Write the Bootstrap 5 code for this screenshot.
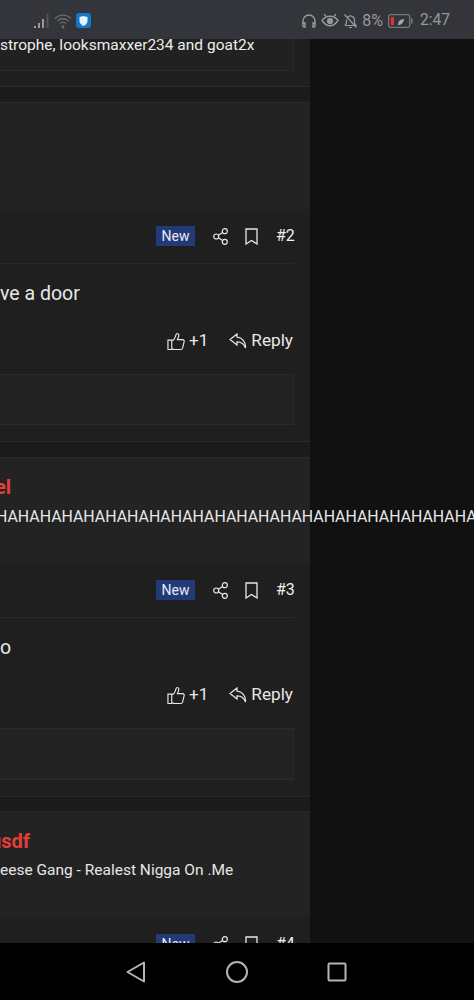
<!DOCTYPE html>
<html lang="en">
<head>
  <meta charset="UTF-8" />
  <meta name="viewport" content="width=device-width, initial-scale=1.0" />
  <title>Thread</title>
  <link href="https://cdn.jsdelivr.net/npm/bootstrap@5.3.0/dist/css/bootstrap.min.css" rel="stylesheet">
  <style>
    html, body { height: 100%; background: #111; }
    body { font-family: Roboto, "Liberation Sans", sans-serif; color: #e8e8e8; }
    .phone { height: 1000px; overflow: hidden; }
    /* Android status bar */
    .status-bar { height: 39px; background: #33353a; color: #98999c; font-size: 16px; padding: 2px 24px 0 33px; flex: none; }
    .status-bar svg { display: block; }
    .clock { font-size: 15.6px; }
    .battery-icon { margin-left: 5px; margin-right: 7px; }
    .shield { width: 15px; height: 15px; background: #1478c8; border-radius: 3px; }
    /* forum column */
    .scroll-area { flex: 1 1 auto; overflow: hidden; background: #111; min-height: 0; }
    .forum { width: 310px; background: #1b1b1b; }
    .tail { background: #1f1f1f; border-bottom: 1px solid #292929; height: 48px; padding-right: 16px; }
    .tail-box { height: 32px; border-right: 1px solid #2a2a2a; border-bottom: 1px solid #2a2a2a; background: #212121; font-size: 15.5px; line-height: 13px; color: #eee; white-space: nowrap; }
    .post { margin-top: 15px; background: #1f1f1f; border-top: 1px solid #292929; border-bottom: 1px solid #292929; }
    .post.tight { margin-top: 14px; }
    .post-head { height: 105px; background: #232323; padding-top: 17px; white-space: nowrap; }
    .post-head.tall { height: 106px; }
    .post-name { color: #e53e35; font-weight: 700; font-size: 20px; line-height: 24px; }
    .post-name.cut-el { text-indent: -5px; }
    .post-name.cut-usdf { text-indent: -10px; }
    .post-sig { font-size: 15.5px; line-height: 20px; margin-top: 7px; color: #e6e6e6; }
    .post-sig.wide { font-size: 15.9px; margin-top: 8px; text-indent: -4px; }
    .post-main { padding-right: 16px; }
    .meta-row { height: 55px; border-bottom: 1px solid #2a2a2a; font-size: 16px; color: #eee; }
    .new-tag { background: #223a78; color: #e6ebf5; font-size: 14px; line-height: 20px; width: 39px; text-align: center; margin-right: 18px; }
    .bookmark-icon { margin-left: 17px; }
    .post-no { width: 17px; margin-left: 18px; margin-right: 1px; white-space: nowrap; }
    .post-msg { font-size: 19.5px; line-height: 24px; margin-top: 18px; color: #e8e8e8; white-space: nowrap; }
    .post-actions { margin-top: 23px; height: 24px; font-size: 17.2px; color: #e8e8e8; padding-right: 1px; }
    .reply-icon { margin-left: 21px; }
    .react-box { height: 52px; margin-top: 21px; background: #232323; border: 1px solid #2b2b2b; border-left: 0; margin-bottom: 16px; }
    .react-box.short-box { height: 51px; }
    /* nav bar */
    .nav-strip { height: 57px; background: #000; flex: none; position: relative; z-index: 2; padding: 0 127px 0 126px; }
  </style>
</head>
<body>
  <div class="phone d-flex flex-column">
    <div class="status-bar d-flex align-items-center justify-content-between">
      <div class="d-flex align-items-center gap-1">
        <svg width="17" height="16" viewBox="0 0 17 16"><path d="M1 13h2v2H1zM5 10h2v5H5zM9 6h2v9H9z" fill="#9a9a9a"/><path d="M13.500 1h2v14h-2z" fill="#555"/></svg>
        <svg width="18" height="16" viewBox="0 0 18 16" fill="none" stroke="#6c6d70" stroke-width="1.3"><path d="M1 5.500c4.500-4.500 11.500-4.500 16 0M3.500 8c3-3 8-3 11 0M6 10.500c1.700-1.500 4.300-1.500 6 0"/><circle cx="9" cy="14" r=".8" fill="#6c6d70"/></svg>
        <div class="shield d-flex align-items-center justify-content-center">
          <svg width="9" height="10" viewBox="0 0 9 10"><path d="M.5 1 4.500 0 8.500 1v4c0 2.500-2 4-4 5-2-1-4-2.500-4-5z" fill="#e8f2fb"/></svg>
        </div>
      </div>
      <div class="d-flex align-items-center">
        <svg width="16" height="16" viewBox="0 0 16 16" fill="none" stroke="#98999c" stroke-width="1.4" class="me-1"><path d="M2 11V8a6 6 0 0 1 12 0v3"/><path d="M12 10h2v3a1 1 0 0 1-1 1h-1zM4 10H2v3a1 1 0 0 0 1 1h1z"/></svg>
        <svg width="18" height="15" viewBox="0 0 17 14" fill="none" stroke="#98999c" stroke-width="1.3" class="me-1"><path d="M1 7c2-3 4.500-4 7.500-4s5.500 1 7.500 4c-2 3-4.500 5-7.500 5S3 10 1 7z"/><circle cx="8.500" cy="7.500" r="2.300" fill="#98999c"/><path d="M3 1l1.500 2M14 1l-1.500 2"/></svg>
        <svg width="15" height="16" viewBox="0 0 15 16" fill="none" stroke="#98999c" stroke-width="1.2" class="me-1"><path d="M2 12.500h11l-1.500-2.500V7a4 4 0 0 0-7.500-2M3.500 6.500V10L2 12.500M6 14.500h3M1.500 1.500l12 13"/></svg>
        <span>8%</span>
        <svg width="25" height="14" viewBox="0 0 25 14" class="battery-icon"><rect x=".7" y=".7" width="21" height="12.600" rx="2" fill="none" stroke="#77787b" stroke-width="1.3"/><rect x="3" y="3" width="3" height="8" fill="#e0332c"/><path d="M23 4.500h1.500v5H23z" fill="#77787b"/><path d="M10 11c0-4 3-6 6-6-.5 4-3 6-6 6z" fill="#a8a9ac"/></svg>
        <span class="clock">2:47</span>
      </div>
    </div>

    <div class="scroll-area">
      <div class="forum">
        <div class="tail">
          <div class="tail-box">strophe, looksmaxxer234 and goat2x</div>
        </div>

        <div class="post">
          <div class="post-head tall"></div>
          <div class="post-main">
            <div class="meta-row d-flex align-items-center justify-content-end">
              <span class="new-tag">New</span>
              <svg width="15" height="17" viewBox="0 0 15 17" fill="none" stroke="#e8e8e8" stroke-width="1.2"><circle cx="3.200" cy="8.500" r="2.500"/><circle cx="11.800" cy="3.200" r="2.500"/><circle cx="11.800" cy="13.800" r="2.500"/><path d="M5.400 7.200 9.600 4.500M5.400 9.800l4.200 2.700"/></svg>
              <svg class="bookmark-icon" width="13" height="17" viewBox="0 0 13 17" fill="none" stroke="#e8e8e8" stroke-width="1.3"><path d="M1 1h11v15l-5.500-3.500L1 16z"/></svg>
              <span class="post-no">#2</span>
            </div>
            <div class="post-msg">ve a door</div>
            <div class="post-actions d-flex align-items-center justify-content-end">
              <svg width="18" height="19" viewBox="0 0 19 19" fill="none" stroke="#e8e8e8" stroke-width="1.2" class="me-1"><path d="M1 8h4v10H1zM5 9c2-1 3.500-3 4-5 .3-1.500.8-3 2-3 1.500 0 1.800 2 1 4l-1 2.500h5.500c1.500 0 2 1.500 1.500 2.500l-1.500 6.500c-.3 1-1 1.500-2 1.500H8c-1.500 0-2-.7-3-1"/></svg>
              <span>+1</span>
              <svg width="18" height="16" viewBox="0 0 18 16" fill="none" stroke="#e8e8e8" stroke-width="1.2" class="reply-icon me-1"><path d="M8 1 1 6.500 8 12V8.800c4 0 7 1.500 8.500 6.200C17 8.500 13 4.500 8 4.200z"/></svg>
              <span>Reply</span>
            </div>
            <div class="react-box short-box"></div>
          </div>
        </div>

        <div class="post">
          <div class="post-head">
            <div class="post-name cut-el">el</div>
            <div class="post-sig wide">HAHAHAHAHAHAHAHAHAHAHAHAHAHAHAHAHAHAHAHAHAHAHAHAHAHAHAHAHAHAHAHAHA</div>
          </div>
          <div class="post-main">
            <div class="meta-row d-flex align-items-center justify-content-end">
              <span class="new-tag">New</span>
              <svg width="15" height="17" viewBox="0 0 15 17" fill="none" stroke="#e8e8e8" stroke-width="1.2"><circle cx="3.200" cy="8.500" r="2.500"/><circle cx="11.800" cy="3.200" r="2.500"/><circle cx="11.800" cy="13.800" r="2.500"/><path d="M5.400 7.200 9.600 4.500M5.400 9.800l4.200 2.700"/></svg>
              <svg class="bookmark-icon" width="13" height="17" viewBox="0 0 13 17" fill="none" stroke="#e8e8e8" stroke-width="1.3"><path d="M1 1h11v15l-5.500-3.500L1 16z"/></svg>
              <span class="post-no">#3</span>
            </div>
            <div class="post-msg">o</div>
            <div class="post-actions d-flex align-items-center justify-content-end">
              <svg width="18" height="19" viewBox="0 0 19 19" fill="none" stroke="#e8e8e8" stroke-width="1.2" class="me-1"><path d="M1 8h4v10H1zM5 9c2-1 3.500-3 4-5 .3-1.500.8-3 2-3 1.500 0 1.800 2 1 4l-1 2.500h5.500c1.500 0 2 1.500 1.500 2.500l-1.500 6.500c-.3 1-1 1.500-2 1.500H8c-1.500 0-2-.7-3-1"/></svg>
              <span>+1</span>
              <svg width="18" height="16" viewBox="0 0 18 16" fill="none" stroke="#e8e8e8" stroke-width="1.2" class="reply-icon me-1"><path d="M8 1 1 6.500 8 12V8.800c4 0 7 1.500 8.500 6.200C17 8.500 13 4.500 8 4.200z"/></svg>
              <span>Reply</span>
            </div>
            <div class="react-box"></div>
          </div>
        </div>

        <div class="post tight">
          <div class="post-head">
            <div class="post-name cut-usdf">usdf</div>
            <div class="post-sig">eese Gang - Realest Nigga On .Me</div>
          </div>
          <div class="post-main">
            <div class="meta-row d-flex align-items-center justify-content-end">
              <span class="new-tag">New</span>
              <svg width="15" height="17" viewBox="0 0 15 17" fill="none" stroke="#e8e8e8" stroke-width="1.2"><circle cx="3.200" cy="8.500" r="2.500"/><circle cx="11.800" cy="3.200" r="2.500"/><circle cx="11.800" cy="13.800" r="2.500"/><path d="M5.400 7.200 9.600 4.500M5.400 9.800l4.200 2.700"/></svg>
              <svg class="bookmark-icon" width="13" height="17" viewBox="0 0 13 17" fill="none" stroke="#e8e8e8" stroke-width="1.3"><path d="M1 1h11v15l-5.500-3.500L1 16z"/></svg>
              <span class="post-no">#4</span>
            </div>
          </div>
        </div>
      </div>
    </div>

    <div class="nav-strip d-flex align-items-center justify-content-between">
      <svg width="20" height="22" viewBox="0 0 20 22" fill="none" stroke="#b5b5b5" stroke-width="2" stroke-linejoin="round"><path d="M18 1.500v19L1.500 11z"/></svg>
      <svg width="22" height="22" viewBox="0 0 22 22" fill="none" stroke="#b5b5b5" stroke-width="2"><circle cx="11" cy="11" r="10"/></svg>
      <svg width="20" height="20" viewBox="0 0 20 20" fill="none" stroke="#b5b5b5" stroke-width="2" stroke-linejoin="round"><rect x="1.500" y="1.500" width="17" height="17" rx="1"/></svg>
    </div>
  </div>
  <script src="https://cdn.jsdelivr.net/npm/bootstrap@5.3.0/dist/js/bootstrap.bundle.min.js"></script>
</body>
</html>
